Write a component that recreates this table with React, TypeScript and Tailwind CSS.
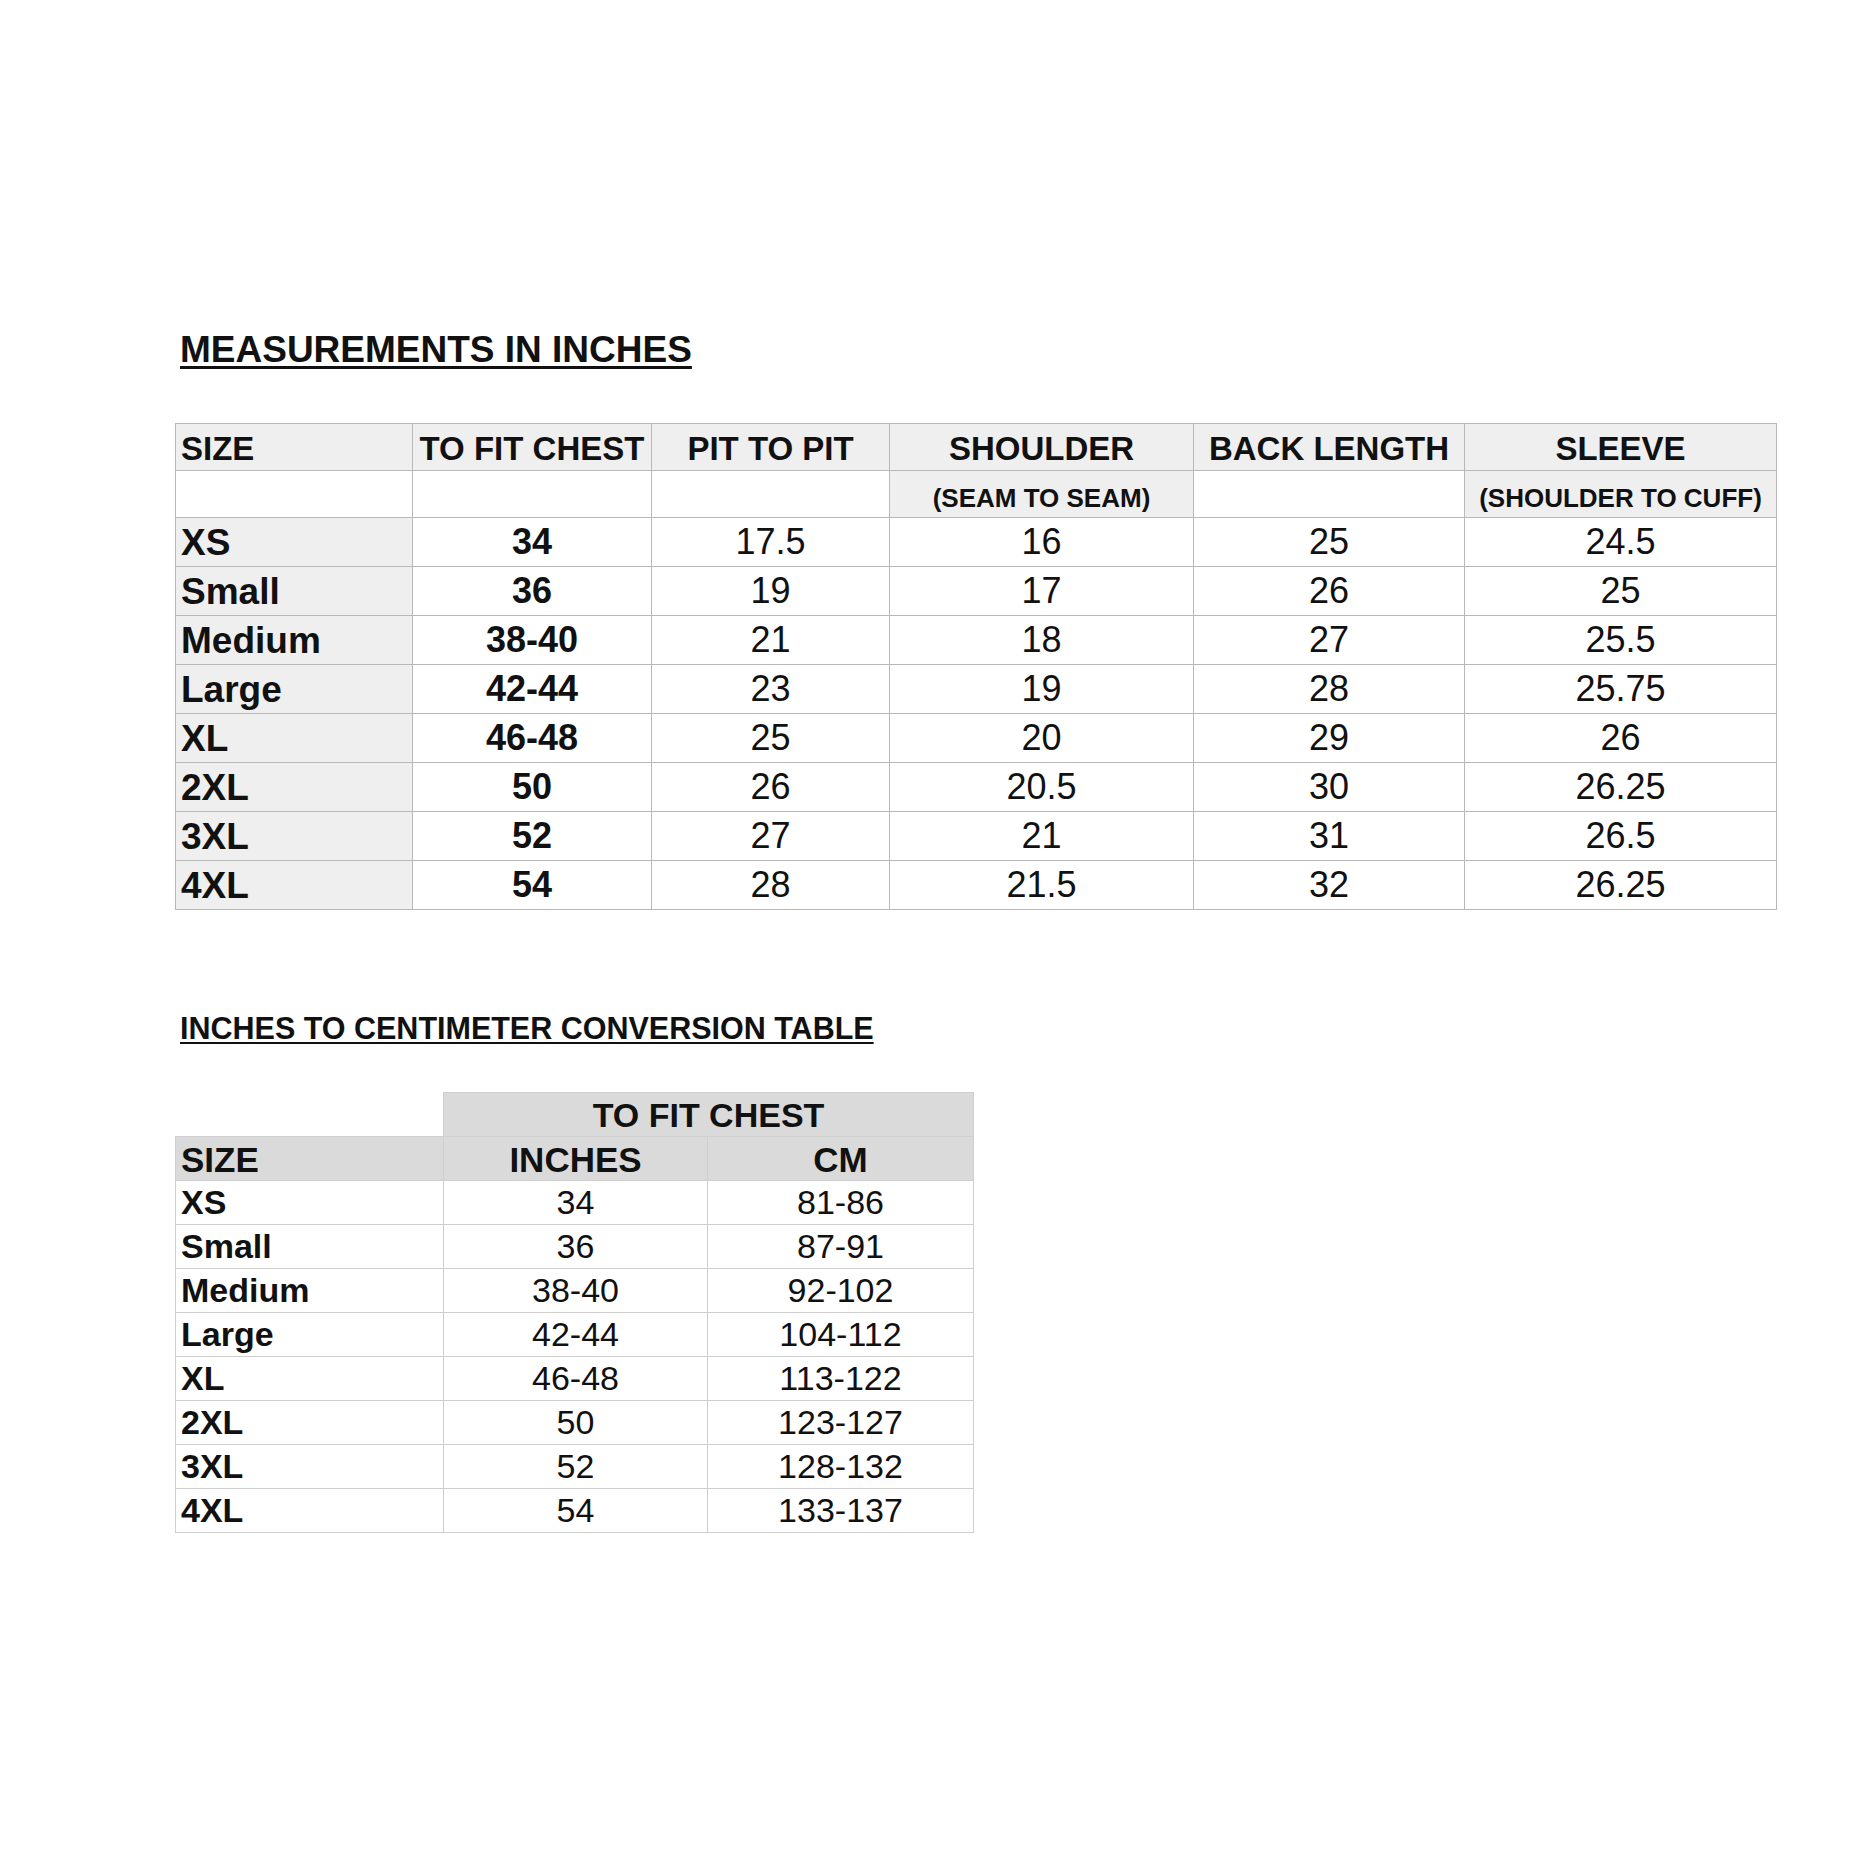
const sizes = [
  { size: "XS", chest: "34", pit: "17.5", shoulder: "16", back: "25", sleeve: "24.5", cm: "81-86" },
  { size: "Small", chest: "36", pit: "19", shoulder: "17", back: "26", sleeve: "25", cm: "87-91" },
  { size: "Medium", chest: "38-40", pit: "21", shoulder: "18", back: "27", sleeve: "25.5", cm: "92-102" },
  { size: "Large", chest: "42-44", pit: "23", shoulder: "19", back: "28", sleeve: "25.75", cm: "104-112" },
  { size: "XL", chest: "46-48", pit: "25", shoulder: "20", back: "29", sleeve: "26", cm: "113-122" },
  { size: "2XL", chest: "50", pit: "26", shoulder: "20.5", back: "30", sleeve: "26.25", cm: "123-127" },
  { size: "3XL", chest: "52", pit: "27", shoulder: "21", back: "31", sleeve: "26.5", cm: "128-132" },
  { size: "4XL", chest: "54", pit: "28", shoulder: "21.5", back: "32", sleeve: "26.25", cm: "133-137" },
];

const cell = "border border-[#b8b8b8] p-0 leading-none";
const cell2 = "border border-[#cfcfcf] p-0 leading-none";

export default function App() {
  return (
    <div className="min-h-[1856px] w-[1856px] bg-white text-[#111] font-['Liberation_Sans',Arial,sans-serif] pl-[175px] pt-[331px]">
      <h1 className="pl-[5px] text-[37px] font-bold leading-none underline decoration-[2.5px] underline-offset-[4px]">
        MEASUREMENTS IN INCHES
      </h1>

      <table className="mt-[55px] table-fixed border-collapse w-[1601px]">
        <colgroup>
          <col className="w-[237px]" />
          <col className="w-[239px]" />
          <col className="w-[238px]" />
          <col className="w-[304px]" />
          <col className="w-[271px]" />
          <col className="w-[312px]" />
        </colgroup>
        <thead>
          <tr className="h-[47px] bg-[#efefef] text-[33px] font-bold">
            <th className={`${cell} text-left pl-[5px] pt-[2px]`}>SIZE</th>
            <th className={`${cell} pt-[2px]`}>TO FIT CHEST</th>
            <th className={`${cell} pt-[2px]`}>PIT TO PIT</th>
            <th className={`${cell} pt-[2px]`}>SHOULDER</th>
            <th className={`${cell} pt-[2px]`}>BACK LENGTH</th>
            <th className={`${cell} pt-[2px]`}>SLEEVE</th>
          </tr>
          <tr className="h-[47px] text-[26px] font-bold">
            <th className={`${cell} bg-white`}></th>
            <th className={`${cell} bg-white`}></th>
            <th className={`${cell} bg-white`}></th>
            <th className={`${cell} bg-[#efefef] pt-[7px]`}>(SEAM TO SEAM)</th>
            <th className={`${cell} bg-white`}></th>
            <th className={`${cell} bg-[#efefef] pt-[7px]`}>(SHOULDER TO CUFF)</th>
          </tr>
        </thead>
        <tbody className="text-[36px]">
          {sizes.map((r) => (
            <tr key={r.size} className="h-[49px]">
              <td className={`${cell} bg-[#efefef] pl-[5px] font-bold text-[37px]`}>{r.size}</td>
              <td className={`${cell} text-center font-bold`}>{r.chest}</td>
              <td className={`${cell} text-center`}>{r.pit}</td>
              <td className={`${cell} text-center`}>{r.shoulder}</td>
              <td className={`${cell} text-center`}>{r.back}</td>
              <td className={`${cell} text-center`}>{r.sleeve}</td>
            </tr>
          ))}
        </tbody>
      </table>

      <h2 className="mt-[103px] pl-[5px] text-[30.5px] font-bold leading-none underline decoration-2 underline-offset-[3px]">
        INCHES TO CENTIMETER CONVERSION TABLE
      </h2>

      <table className="mt-[48px] table-fixed border-collapse w-[798px]">
        <colgroup>
          <col className="w-[268px]" />
          <col className="w-[264px]" />
          <col className="w-[266px]" />
        </colgroup>
        <thead>
          <tr className="h-[44px] text-[34px] font-bold">
            <th className="border-none p-0"></th>
            <th colSpan={2} className={`${cell2} bg-[#dadada] pt-[2px]`}>TO FIT CHEST</th>
          </tr>
          <tr className="h-[44px] bg-[#dadada] text-[35px] font-bold">
            <th className={`${cell2} text-left pl-[5px] pt-[2px]`}>SIZE</th>
            <th className={`${cell2} pt-[2px]`}>INCHES</th>
            <th className={`${cell2} pt-[2px]`}>CM</th>
          </tr>
        </thead>
        <tbody className="text-[34px]">
          {sizes.map((r) => (
            <tr key={r.size} className="h-[44px]">
              <td className={`${cell2} pl-[5px] font-bold text-[34px]`}>{r.size}</td>
              <td className={`${cell2} text-center`}>{r.chest}</td>
              <td className={`${cell2} text-center`}>{r.cm}</td>
            </tr>
          ))}
        </tbody>
      </table>
    </div>
  );
}
